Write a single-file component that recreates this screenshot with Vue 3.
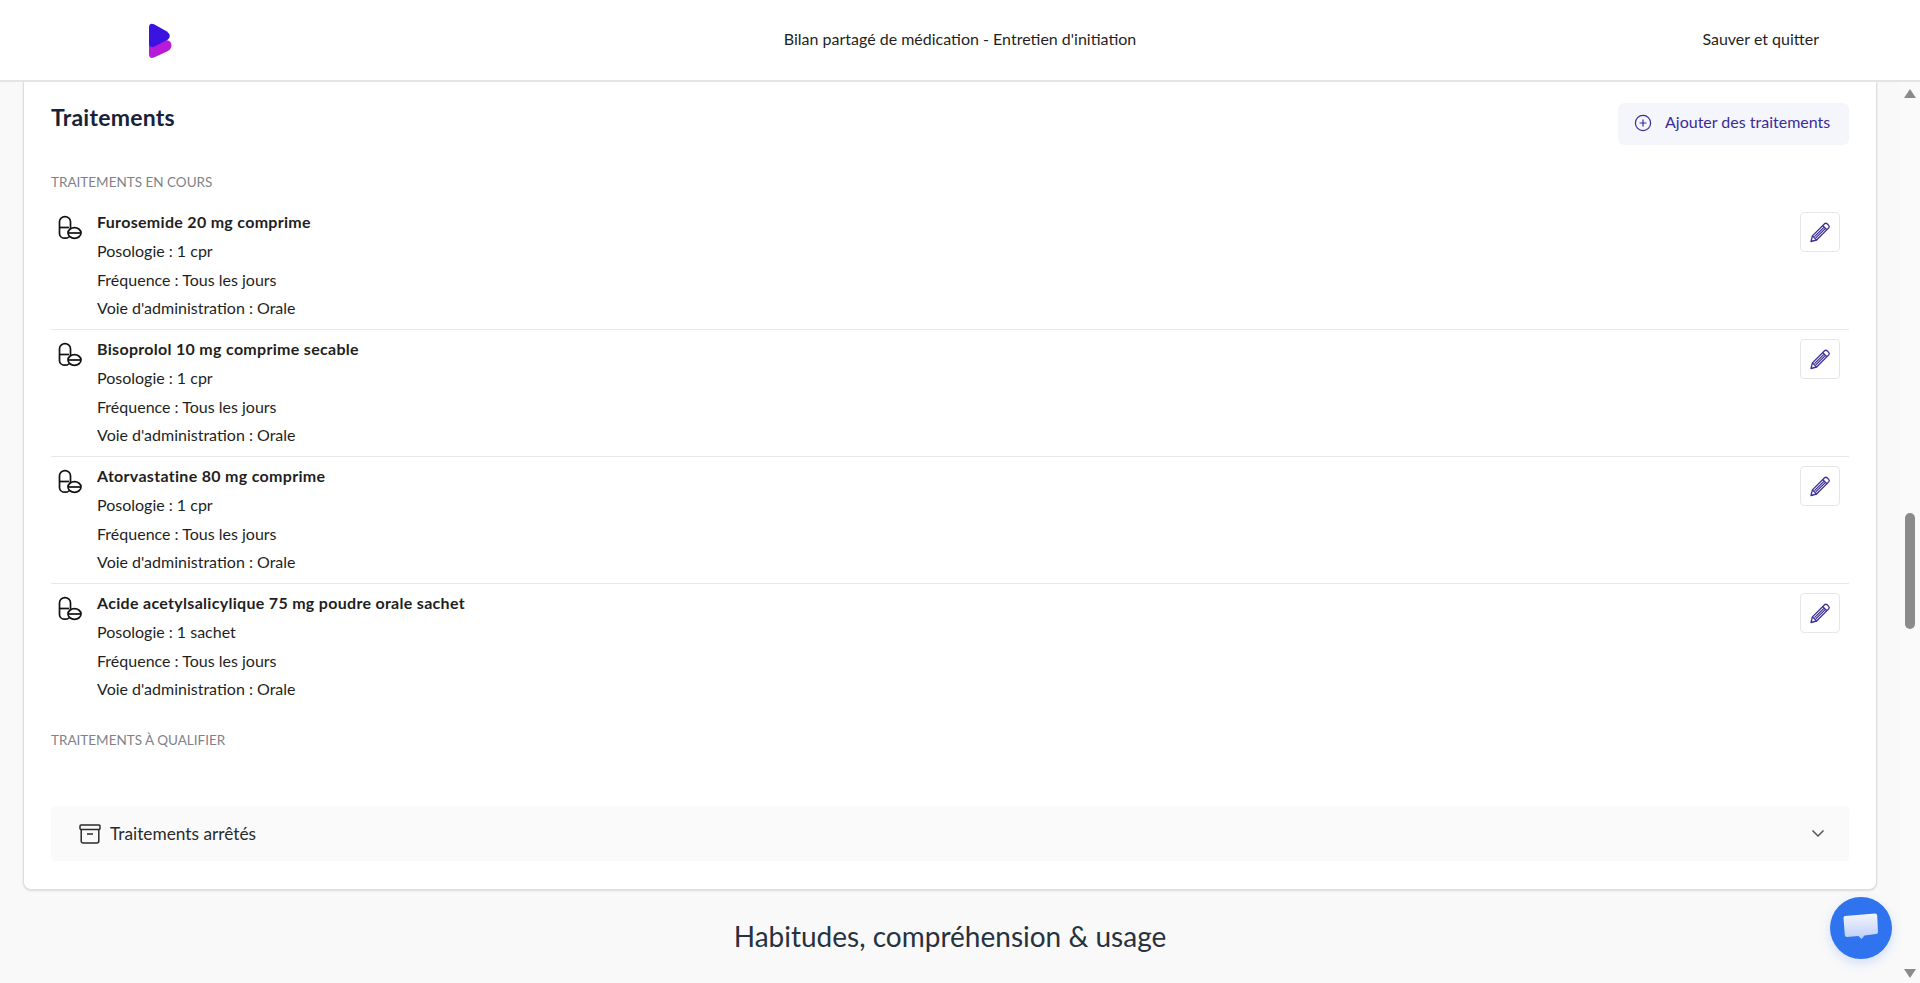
<script setup>
const treatments = [
  { name: 'Furosemide 20 mg comprime', dose: '1 cpr' },
  { name: 'Bisoprolol 10 mg comprime secable', dose: '1 cpr' },
  { name: 'Atorvastatine 80 mg comprime', dose: '1 cpr' },
  { name: 'Acide acetylsalicylique 75 mg poudre orale sachet', dose: '1 sachet' },
]
</script>

<template>
  <div class="app">
    <header class="header">
      <div class="logo-cell">
        <svg class="logo" width="26" height="36" viewBox="0 0 26 36">
          <path d="M2 20 L2 31 Q2 36 7 34.600 L21 28 Q26 24.500 24 20 Q22.500 17 18 17 Z" fill="#b81bd8" />
          <path d="M2 4.500 Q2 -0.500 7 1.200 L20 8.500 Q25 12.500 21 16.500 L7.500 23.500 Q2 25.500 2 20 Z" fill="#3a13e0" />
        </svg>
      </div>
      <div class="header-title">Bilan partagé de médication - Entretien d'initiation</div>
      <div class="header-action">Sauver et quitter</div>
    </header>

    <div class="body">
      <main class="content">
        <section class="card">
          <div class="card-head">
            <h2>Traitements</h2>
            <button class="add">
              <svg width="18" height="18" viewBox="0 0 18 18" fill="none" stroke="#3a2c98" stroke-width="1.2">
                <circle cx="9" cy="9" r="7.6" />
                <path d="M9 5.6v6.800M5.600 9h6.800" />
              </svg>
              <span>Ajouter des traitements</span>
            </button>
          </div>

          <div class="section-label first">TRAITEMENTS EN COURS</div>

          <div class="list">
            <article v-for="t in treatments" :key="t.name" class="row">
              <svg class="pill" width="26" height="26" viewBox="0 0 26 26" fill="none" stroke="#111" stroke-width="1.7">
                <path d="M2.500 6.700a5.500 5 0 0 1 11 0v12a5.500 4.600 0 0 1-5.500 4.500a5.500 4.600 0 0 1-5.500-4.500z" />
                <path d="M2.500 12.500h9.500" />
                <ellipse cx="17.500" cy="18" rx="6.500" ry="5.300" fill="#fff" />
                <path d="M11.500 18h12" />
              </svg>
              <div class="info">
                <div class="name">{{ t.name }}</div>
                <div>Posologie : {{ t.dose }}</div>
                <div>Fréquence : Tous les jours</div>
                <div>Voie d'administration : Orale</div>
              </div>
              <button class="edit" aria-label="Modifier">
                <svg width="22" height="22" viewBox="0 0 22 22" fill="none" stroke="#3a2c98" stroke-width="1.300" stroke-linejoin="round">
                  <path d="M2 20.500l1.400-5.600L15.600 2.800a1.800 1.800 0 0 1 2.500 0l1.600 1.600a1.800 1.800 0 0 1 0 2.500L7.600 19z" />
                  <path d="M3.400 14.900l4.200 4.100M13.800 4.600l4.100 4.100M5.500 15.600l10.200-10M6.800 16.900l10.200-10" />
                </svg>
              </button>
            </article>
          </div>

          <div class="section-label second">TRAITEMENTS À QUALIFIER</div>

          <div class="accordion">
            <svg width="22" height="20" viewBox="0 0 22 20" fill="none" stroke="#2b2b2b" stroke-width="1.500" stroke-linejoin="round">
              <rect x="1" y="1" width="20" height="4.500" rx="1" />
              <path d="M2.200 5.500V17a2 2 0 0 0 2 2h13.600a2 2 0 0 0 2-2V5.500M8 10h6" />
            </svg>
            <span class="acc-label">Traitements arrêtés</span>
            <svg class="chev" width="14" height="9" viewBox="0 0 14 9" fill="none" stroke="#555" stroke-width="1.500">
              <path d="M1.500 1.500L7 7l5.500-5.500" />
            </svg>
          </div>
        </section>

        <h1 class="next">Habitudes, compréhension &amp; usage</h1>
      </main>

      <aside class="scrollbar">
        <span class="arrow up"></span>
        <span class="track"><span class="thumb"></span></span>
        <span class="arrow down"></span>
      </aside>
    </div>

    <button class="chat" aria-label="Messagerie">
      <svg width="38" height="32" viewBox="0 0 38 32">
        <defs>
          <linearGradient id="bubble" x1="0" y1="0" x2="0" y2="1">
            <stop offset="0" stop-color="#f4f6fd" />
            <stop offset="1" stop-color="#bccdf5" />
          </linearGradient>
        </defs>
        <path d="M3 4 L33 1.500 Q35 1.500 35.200 3.500 L36 20 Q36 22 34 22 L22.500 23.500 L19.500 27 L16.500 24 L5 25 Q3 25 2.800 23 L1.500 6 Q1.500 4.200 3 4 Z" fill="url(#bubble)" />
      </svg>
    </button>
  </div>
</template>

<style>
html, body { margin: 0; height: 100%; overflow: hidden; }
</style>

<style scoped>
.app {
  position: relative;
  height: 983px;
  display: flex;
  flex-direction: column;
  overflow: hidden;
  background: #f9f9f9;
  font-family: Lato, "Open Sans", sans-serif;
  color: #1f1f1f;
}
.header {
  height: 80px;
  flex: none;
  display: grid;
  grid-template-columns: 1fr auto 1fr;
  align-items: center;
  background: #fff;
  border-bottom: 2px solid #e4e4e4;
  position: relative;
  z-index: 2;
}
.logo-cell { padding-left: 147px; display: flex; }
.logo { margin-top: 1px; }
.header-title { font-size: 16px; margin-top: -4px; }
.header-action { justify-self: end; padding-right: 101px; font-size: 16px; margin-top: -4px; }
.body { flex: 1; min-height: 0; display: flex; }
.content { flex: 1; min-width: 0; padding: 0 23px; }
.card {
  background: #fff;
  border: 1px solid #dedede;
  border-top: 0;
  border-radius: 0 0 8px 8px;
  box-shadow: 0 1px 2px rgba(0, 0, 0, .12);
  padding: 20px 27px 28px;
}
.card-head { display: flex; justify-content: space-between; align-items: flex-start; }
h2 { margin: 1px 0 0; font-size: 23px; line-height: 28px; font-weight: 700; letter-spacing: .25px; color: #172338; }
.add {
  height: 42px;
  width: 231px;
  margin-top: 1px;
  border: 0;
  border-radius: 6px;
  background: #f5f6fc;
  color: #3a2c98;
  font: inherit;
  font-size: 16px;
  display: flex;
  align-items: center;
  gap: 13px;
  padding: 0 16px;
}
.add span { padding-bottom: 5px; }
.add svg { margin-bottom: 2px; }
.section-label { font-size: 13.500px; line-height: 18px; color: #7f8288; }
.first { margin-top: 28px; }
.second { margin-top: 21px; }
.list { margin-top: 12px; }
.row {
  display: flex;
  padding: 5px 0 6px;
  height: 127px;
  box-sizing: border-box;
  border-top: 1px solid #e8e8e8;
}
.row:first-child { border-top: 0; height: 126px; }
.pill { flex: none; margin: 7px 0 0 6px; }
.info { flex: 1; margin-left: 14px; font-size: 16px; line-height: 28.800px; }
.name { font-weight: 700; letter-spacing: .3px; }
.edit {
  width: 40px;
  height: 40px;
  margin: 4px 9px 0 0;
  border: 1px solid #e6e6e6;
  border-radius: 4px;
  background: #fff;
  display: flex;
  align-items: center;
  justify-content: center;
  padding: 0;
}
.accordion {
  height: 55px;
  margin-top: 57px;
  background: #fafafa;
  border-radius: 4px;
  display: flex;
  align-items: center;
  padding: 0 24px 0 28px;
}
.acc-label { flex: 1; margin-left: 9px; font-size: 17.300px; color: #2b2b2b; }
.next {
  margin: 28px 0 0;
  text-align: center;
  font-size: 28px;
  line-height: 36px;
  font-weight: 400;
  color: #28323f;
}
.scrollbar {
  width: 20px;
  flex: none;
  display: flex;
  flex-direction: column;
  align-items: center;
  padding: 7px 0 5px;
  box-sizing: border-box;
  background: #fafafa;
}
.track { flex: 1; display: block; width: 10px; padding-top: 415px; }
.thumb { display: block; width: 10px; height: 116px; border-radius: 5px; background: #8b8b8b; }
.arrow { width: 0; height: 0; border-left: 6px solid transparent; border-right: 6px solid transparent; }
.up { border-bottom: 9px solid #8b8b8b; }
.down { border-top: 9px solid #8b8b8b; }
.chat {
  position: absolute;
  left: 1830px;
  top: 897px;
  width: 62px;
  height: 62px;
  padding: 0;
  border: 0;
  border-radius: 50%;
  background: #2f73ee;
  box-shadow: 0 4px 12px rgba(47, 115, 238, .2);
  display: flex;
  align-items: center;
  justify-content: center;
}
</style>
